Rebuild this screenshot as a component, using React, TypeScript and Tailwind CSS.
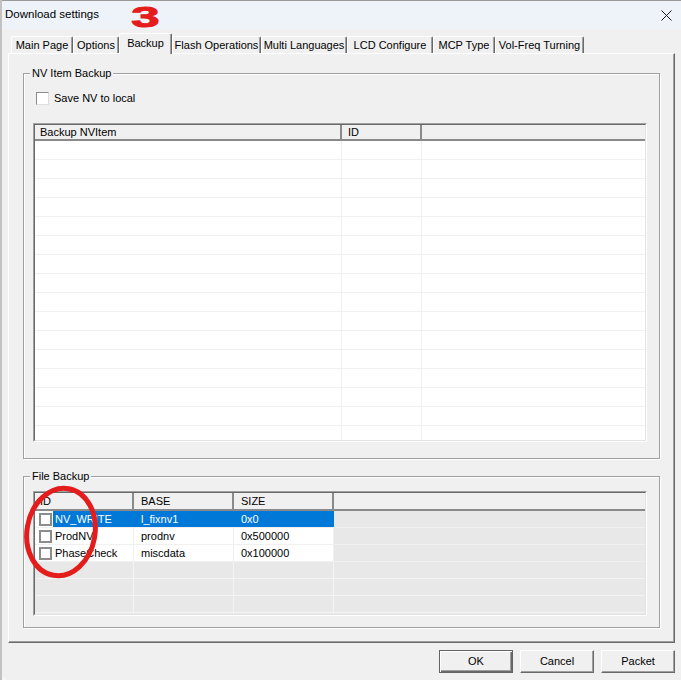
import React from 'react';

// Classic Win32 "Download settings" dialog, Backup tab selected

const tabs = [
  { label: 'Main Page', w: 'w-[62px]' },
  { label: 'Options', w: 'w-[46px]' },
  { label: 'Backup', w: 'w-[53px]', active: true },
  { label: 'Flash Operations', w: 'w-[89px]' },
  { label: 'Multi Languages', w: 'w-[86px]' },
  { label: 'LCD Configure', w: 'w-[86px]' },
  { label: 'MCP Type', w: 'w-[62px]' },
  { label: 'Vol-Freq Turning', w: 'w-[89px]' },
];

const fileRows = [
  { id: 'NV_WRITE', base: 'l_fixnv1', size: '0x0', selected: true },
  { id: 'ProdNV', base: 'prodnv', size: '0x500000' },
  { id: 'PhaseCheck', base: 'miscdata', size: '0x100000' },
];

const Tab: React.FC<{ label: string; w: string; active?: boolean }> = ({ label, w, active }) =>
  active ? (
    <div
      className={`${w} h-[21px] -mb-[1px] relative z-10 flex items-center justify-center bg-[#f0f0f0] border-t border-l border-r border-t-white border-l-white border-r-[#696969] rounded-t-[2px] shadow-[inset_-1px_0_0_#a0a0a0] pb-[2px]`}
    >
      {label}
    </div>
  ) : (
    <div
      className={`${w} h-[17px] flex items-center justify-center bg-[#f0f0f0] border-t border-l border-r border-t-white border-l-white border-r-[#696969] rounded-t-[2px] shadow-[inset_-1px_0_0_#a0a0a0]`}
    >
      {label}
    </div>
  );

const GroupBox: React.FC<{ title: string; className: string; children: React.ReactNode }> = ({
  title,
  className,
  children,
}) => (
  <div
    className={`relative border border-[#a0a0a0] shadow-[inset_1px_1px_0_#ffffff,1px_1px_0_#ffffff] ${className}`}
  >
    <span className="absolute -top-[8px] left-[6px] px-[2px] leading-[14px] bg-[#f0f0f0]">{title}</span>
    {children}
  </div>
);

// sunken list frame: two-tone outer + inner border
const ListFrame: React.FC<{ className: string; children: React.ReactNode }> = ({ className, children }) => (
  <div className={`min-h-0 border border-t-[#a0a0a0] border-l-[#a0a0a0] border-r-white border-b-white ${className}`}>
    <div className="h-full border border-t-[#696969] border-l-[#696969] border-r-[#e3e3e3] border-b-[#e3e3e3] overflow-hidden flex flex-col">
      {children}
    </div>
  </div>
);

const HeadCell: React.FC<{ label?: string; w: string; pl?: string }> = ({ label, w, pl = 'pl-[5px]' }) => (
  <div className={`${w} ${pl} h-full flex items-center border-r-2 border-[#8a8a8a] shrink-0`}>{label}</div>
);

const Button: React.FC<{ label: string; isDefault?: boolean }> = ({ label, isDefault }) =>
  isDefault ? (
    <button className="w-[74px] h-[23px] bg-[#f0f0f0] border border-[#646464] shadow-[inset_1px_1px_0_#ffffff,inset_-1px_-1px_0_#696969,inset_-2px_-2px_0_#a0a0a0] flex items-center justify-center">
      {label}
    </button>
  ) : (
    <button className="w-[74px] h-[23px] bg-[#f0f0f0] border border-t-white border-l-white border-r-[#696969] border-b-[#696969] shadow-[inset_-1px_-1px_0_#a0a0a0] flex items-center justify-center">
      {label}
    </button>
  );

export default function App() {
  const nvRows = Array.from({ length: 16 });
  const emptyFileRows = Array.from({ length: 4 });

  return (
    <div className="relative w-[681px] h-[680px] flex bg-[#f6f6f6] text-[11px] text-black font-['Liberation_Sans',Arial,sans-serif] overflow-hidden">
      {/* sliver of the window behind */}
      <div className="w-[2px] h-full bg-[#c2c2c2]" />

      <div className="flex-1 flex flex-col bg-[#f0f0f0] rounded-bl-[7px] border-t border-[#9a9a9a]">
        {/* title bar */}
        <div className="h-[28px] shrink-0 flex items-center justify-between pl-[3px] pr-[7px] bg-[#eef3f9] text-[11.5px]">
          <span>Download settings</span>
          <svg width="11" height="11" viewBox="0 0 11 11" className="mr-[2px]">
            <path d="M0.5 0.5L10.5 10.5M10.5 0.5L0.5 10.5" stroke="#1a1a1a" strokeWidth="1" />
          </svg>
        </div>

        {/* tab strip */}
        <div className="h-[24px] shrink-0 flex items-end pl-[9px]">
          {tabs.map((t) => (
            <Tab key={t.label} {...t} />
          ))}
        </div>

        {/* tab page */}
        <div className="h-[590px] shrink-0 mx-[6px] flex flex-col px-[14px] pt-[19px] pb-[14px] border border-t-white border-l-white border-r-[#696969] border-b-[#696969] shadow-[inset_-1px_-1px_0_#a0a0a0]">
          <GroupBox title="NV Item Backup" className="h-[386px] shrink-0 flex flex-col pl-[9px] pr-[12px] pt-[18px] pb-[16px]">
            <label className="flex items-center h-[13px] ml-[3px] shrink-0">
              <span className="w-[13px] h-[13px] bg-white border border-t-[#8a8a8a] border-l-[#8a8a8a] border-r-[#dedede] border-b-[#dedede]" />
              <span className="ml-[5px]">Save NV to local</span>
            </label>
            <ListFrame className="mt-[18px] flex-1 bg-white">
              <div className="h-[16px] shrink-0 flex bg-[#f0f0f0] border-b-2 border-[#8a8a8a]">
                <HeadCell label="Backup NVItem" w="w-[307px]" />
                <HeadCell label="ID" w="w-[80px]" pl="pl-[6px]" />
              </div>
              {nvRows.map((_, i) => (
                <div key={i} className="h-[19px] shrink-0 flex border-b border-[#f0f0f0]">
                  <div className="w-[307px] border-r border-[#f0f0f0]" />
                  <div className="w-[80px] border-r border-[#f0f0f0]" />
                  <div className="flex-1" />
                </div>
              ))}
            </ListFrame>
          </GroupBox>

          <GroupBox title="File Backup" className="mt-[17px] flex-1 min-h-0 flex flex-col pl-[9px] pr-[12px] pt-[14px] pb-[11px]">
            <ListFrame className="flex-1 bg-[#e8e8e8]">
              <div className="h-[18px] shrink-0 flex bg-[#f0f0f0] border-b-2 border-[#8a8a8a]">
                <HeadCell label="ID" w="w-[99px]" />
                <HeadCell label="BASE" w="w-[100px]" pl="pl-[7px]" />
                <HeadCell label="SIZE" w="w-[100px]" pl="pl-[7px]" />
              </div>
              {fileRows.map((r) => (
                <div key={r.id} className="h-[17px] shrink-0 flex border-b border-[#f0f0f0]">
                  <div className="w-[99px] flex items-center pl-[4px] bg-white">
                    <span className="w-[13px] h-[13px] shrink-0 bg-white border-2 border-[#8c8c8c]" />
                    {r.selected ? (
                      <span className="ml-[1px] flex-1 h-full flex items-center pl-[2px] bg-[#0078d7] text-white">
                        {r.id}
                      </span>
                    ) : (
                      <span className="ml-[1px] flex-1 h-full flex items-center pl-[2px] border-r border-[#f0f0f0]">
                        {r.id}
                      </span>
                    )}
                  </div>
                  {r.selected ? (
                    <>
                      <div className="w-[100px] flex items-center pl-[7px] bg-[#0078d7] text-white">{r.base}</div>
                      <div className="w-[100px] flex items-center pl-[7px] bg-[#0078d7] text-white">{r.size}</div>
                    </>
                  ) : (
                    <>
                      <div className="w-[100px] flex items-center pl-[7px] bg-white border-r border-[#f0f0f0]">
                        {r.base}
                      </div>
                      <div className="w-[100px] flex items-center pl-[7px] bg-white border-r border-[#f0f0f0]">
                        {r.size}
                      </div>
                    </>
                  )}
                  <div className="flex-1" />
                </div>
              ))}
              {emptyFileRows.map((_, i) => (
                <div key={i} className="h-[17px] shrink-0 flex border-b border-[#f3f3f3]">
                  <div className="w-[99px] border-r border-[#f3f3f3]" />
                  <div className="w-[100px] border-r border-[#f3f3f3]" />
                  <div className="w-[100px] border-r border-[#f3f3f3]" />
                  <div className="flex-1" />
                </div>
              ))}
            </ListFrame>
          </GroupBox>
        </div>

        {/* dialog buttons */}
        <div className="mt-[7px] flex justify-end gap-[7px] pr-[6px]">
          <Button label="OK" isDefault />
          <Button label="Cancel" />
          <Button label="Packet" />
        </div>
      </div>

      {/* red hand-drawn annotations */}
      <span className="absolute left-[137px] top-0 text-[30px] leading-[34px] font-bold text-[#e41c1c] scale-x-170 [-webkit-text-stroke:1px_#e41c1c] pointer-events-none">
        3
      </span>
      <svg className="absolute left-[20px] top-[482px] pointer-events-none" width="84" height="100" viewBox="0 0 84 100">
        <ellipse
          cx="41"
          cy="50"
          rx="34"
          ry="44"
          transform="rotate(10 41 50)"
          fill="none"
          stroke="#e41c1c"
          strokeWidth="5"
        />
      </svg>
    </div>
  );
}
